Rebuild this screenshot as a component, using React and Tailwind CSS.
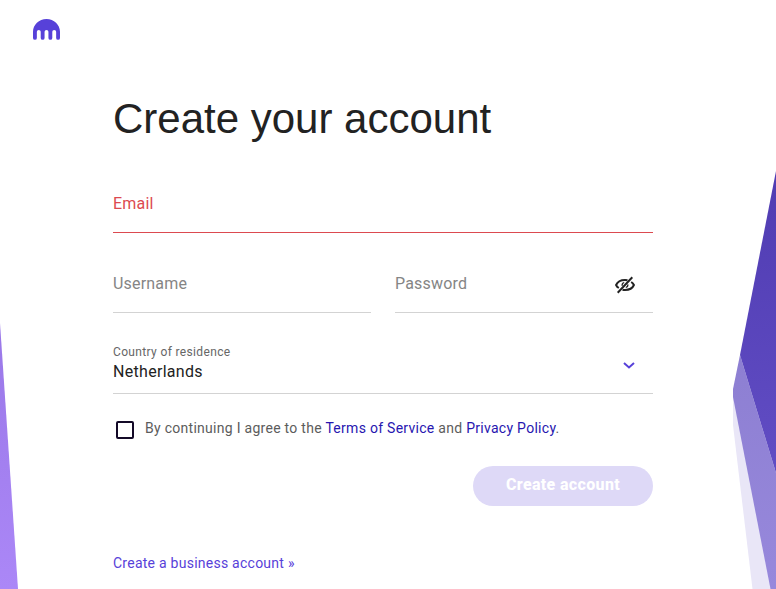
import { useState } from 'react';

function Logo() {
  return (
    <svg className="block h-[21px] w-[27px]" viewBox="0 0 27 22" preserveAspectRatio="none" fill="#5741d9">
      <path d="M13.5 0C6 0 0 6 0 13.4v6.5a1.9 1.9 0 0 0 3.85 0v-6.5a1.93 1.93 0 0 1 3.86 0v6.5a1.93 1.93 0 0 0 3.86 0v-6.5a1.93 1.93 0 0 1 3.86 0v6.5a1.93 1.93 0 0 0 3.86 0v-6.5a1.93 1.93 0 0 1 3.86 0v6.5a1.9 1.9 0 0 0 3.85 0v-6.5C27 6 21 0 13.5 0z" />
    </svg>
  );
}

function EyeOff() {
  return (
    <svg className="block h-[18px] w-[20px]" viewBox="0 0 20 18" fill="none" stroke="#222" strokeWidth="2">
      <path d="M12.5 4.3C11.700 4.100 10.900 4 10 4 5.700 4 2.300 6.200 1.100 9c.5 1.200 1.400 2.200 2.700 3" />
      <path d="M16.200 6c1.300.8 2.200 1.800 2.700 3-1.200 2.800-4.600 5-8.900 5-.9 0-1.700-.1-2.500-.300" />
      <path d="M9.200 6.500A2.800 2.800 0 0 0 7.200 9.800M12.800 8.300a2.800 2.800 0 0 1-2 3.200" strokeWidth="1.200" />
      <path d="M17.300 1.300L2.700 16.700" strokeWidth="2" />
    </svg>
  );
}

function Backdrop() {
  return (
    <svg className="pointer-events-none absolute inset-0 h-full w-full" viewBox="0 0 776 589">
      <defs>
        <linearGradient id="left" x1="0" y1="0" x2="0" y2="1">
          <stop offset="0" stopColor="#9a78e8" />
          <stop offset="1" stopColor="#ab87f7" />
        </linearGradient>
        <linearGradient id="right" x1="0" y1="0" x2="0" y2="1">
          <stop offset="0" stopColor="#503cb2" />
          <stop offset="1" stopColor="#614dc4" />
        </linearGradient>
        <linearGradient id="facet" x1="0" y1="0" x2="0" y2="1">
          <stop offset="0" stopColor="#8d7fd2" />
          <stop offset="1" stopColor="#9788dc" />
        </linearGradient>
      </defs>
      <path d="M0 323L18 589H0z" fill="url(#left)" />
      <path d="M733 393V425L752.500 589H771z" fill="#e9e6f7" />
      <path d="M740 355L733 389V397L770.500 589H776V473z" fill="url(#facet)" />
      <path d="M776 171L740 355L776 473z" fill="url(#right)" />
    </svg>
  );
}

function Field({ label, error, className, children }) {
  return (
    <div className={`flex h-[57px] items-start justify-between border-b ${error ? 'border-[#dc4a50] text-[#dc4a50]' : 'border-[#d3d3d3] text-[#858585]'} ${className || ''}`}>
      <span className="pt-[16px] text-[16px] leading-6 tracking-[0.2px]">{label}</span>
      {children}
    </div>
  );
}

export default function App() {
  const [agreed, setAgreed] = useState(false);

  return (
    <div className="relative h-[589px] w-[776px] overflow-hidden bg-white font-['Roboto',sans-serif]">
      <Backdrop />
      <header className="pt-[19px] pl-[33px]">
        <Logo />
      </header>

      <main className="ml-[113px] w-[540px]">
        <h1 className="mt-[54px] font-['Liberation_Sans',sans-serif] text-[42px] leading-[50px] text-[#222]">Create your account</h1>

        <Field label="Email" error className="mt-[32px]" />
        <div className="mt-[23px] grid grid-cols-2 gap-6">
          <Field label="Username" />
          <Field label="Password">
            <button className="mt-[20px] mr-[18px]" aria-label="Show password">
              <EyeOff />
            </button>
          </Field>
        </div>

        <div className="mt-[31px] flex h-[50px] justify-between border-b border-[#d3d3d3]">
          <div>
            <p className="text-[12px] leading-[16px] tracking-[0.35px] text-[#666]">Country of residence</p>
            <p className="text-[16px] leading-[24px] tracking-[0.3px] text-[#222]">Netherlands</p>
          </div>
          <svg className="mt-[17px] mr-[18px] block h-[8px] w-[12px]" viewBox="0 0 12 8" fill="none" stroke="#5741d9" strokeWidth="2">
            <path d="M1 2L6 6.500L11 2" />
          </svg>
        </div>

        <div className="mt-[23px] flex h-[24px]">
          <button
            className="mt-[4px] ml-[3px] h-[18px] w-[18px] rounded-[2px] border-2 border-[#140a28]"
            role="checkbox"
            aria-checked={agreed}
            aria-label="Agree to the terms"
            onClick={() => setAgreed(!agreed)}
          />
          <p className="-mt-px ml-[11px] whitespace-nowrap text-[14px] leading-[24px] tracking-[0.28px] text-[#5c5c5c]">
            By continuing I agree to the <a className="text-[#2716b0]">Terms of Service</a> and <a className="text-[#2716b0]">Privacy Policy</a>.
          </p>
        </div>

        <div className="mt-[25px] flex justify-end">
          <button className="h-[40px] w-[180px] rounded-full bg-[#ded9f7] pb-[2px] text-[16px] font-extrabold tracking-[0.35px] text-white">Create account</button>
        </div>

        <a className="mt-[45px] block text-[14px] leading-[24px] tracking-[0.25px] text-[#5741d9]">Create a business account »</a>
      </main>
    </div>
  );
}
